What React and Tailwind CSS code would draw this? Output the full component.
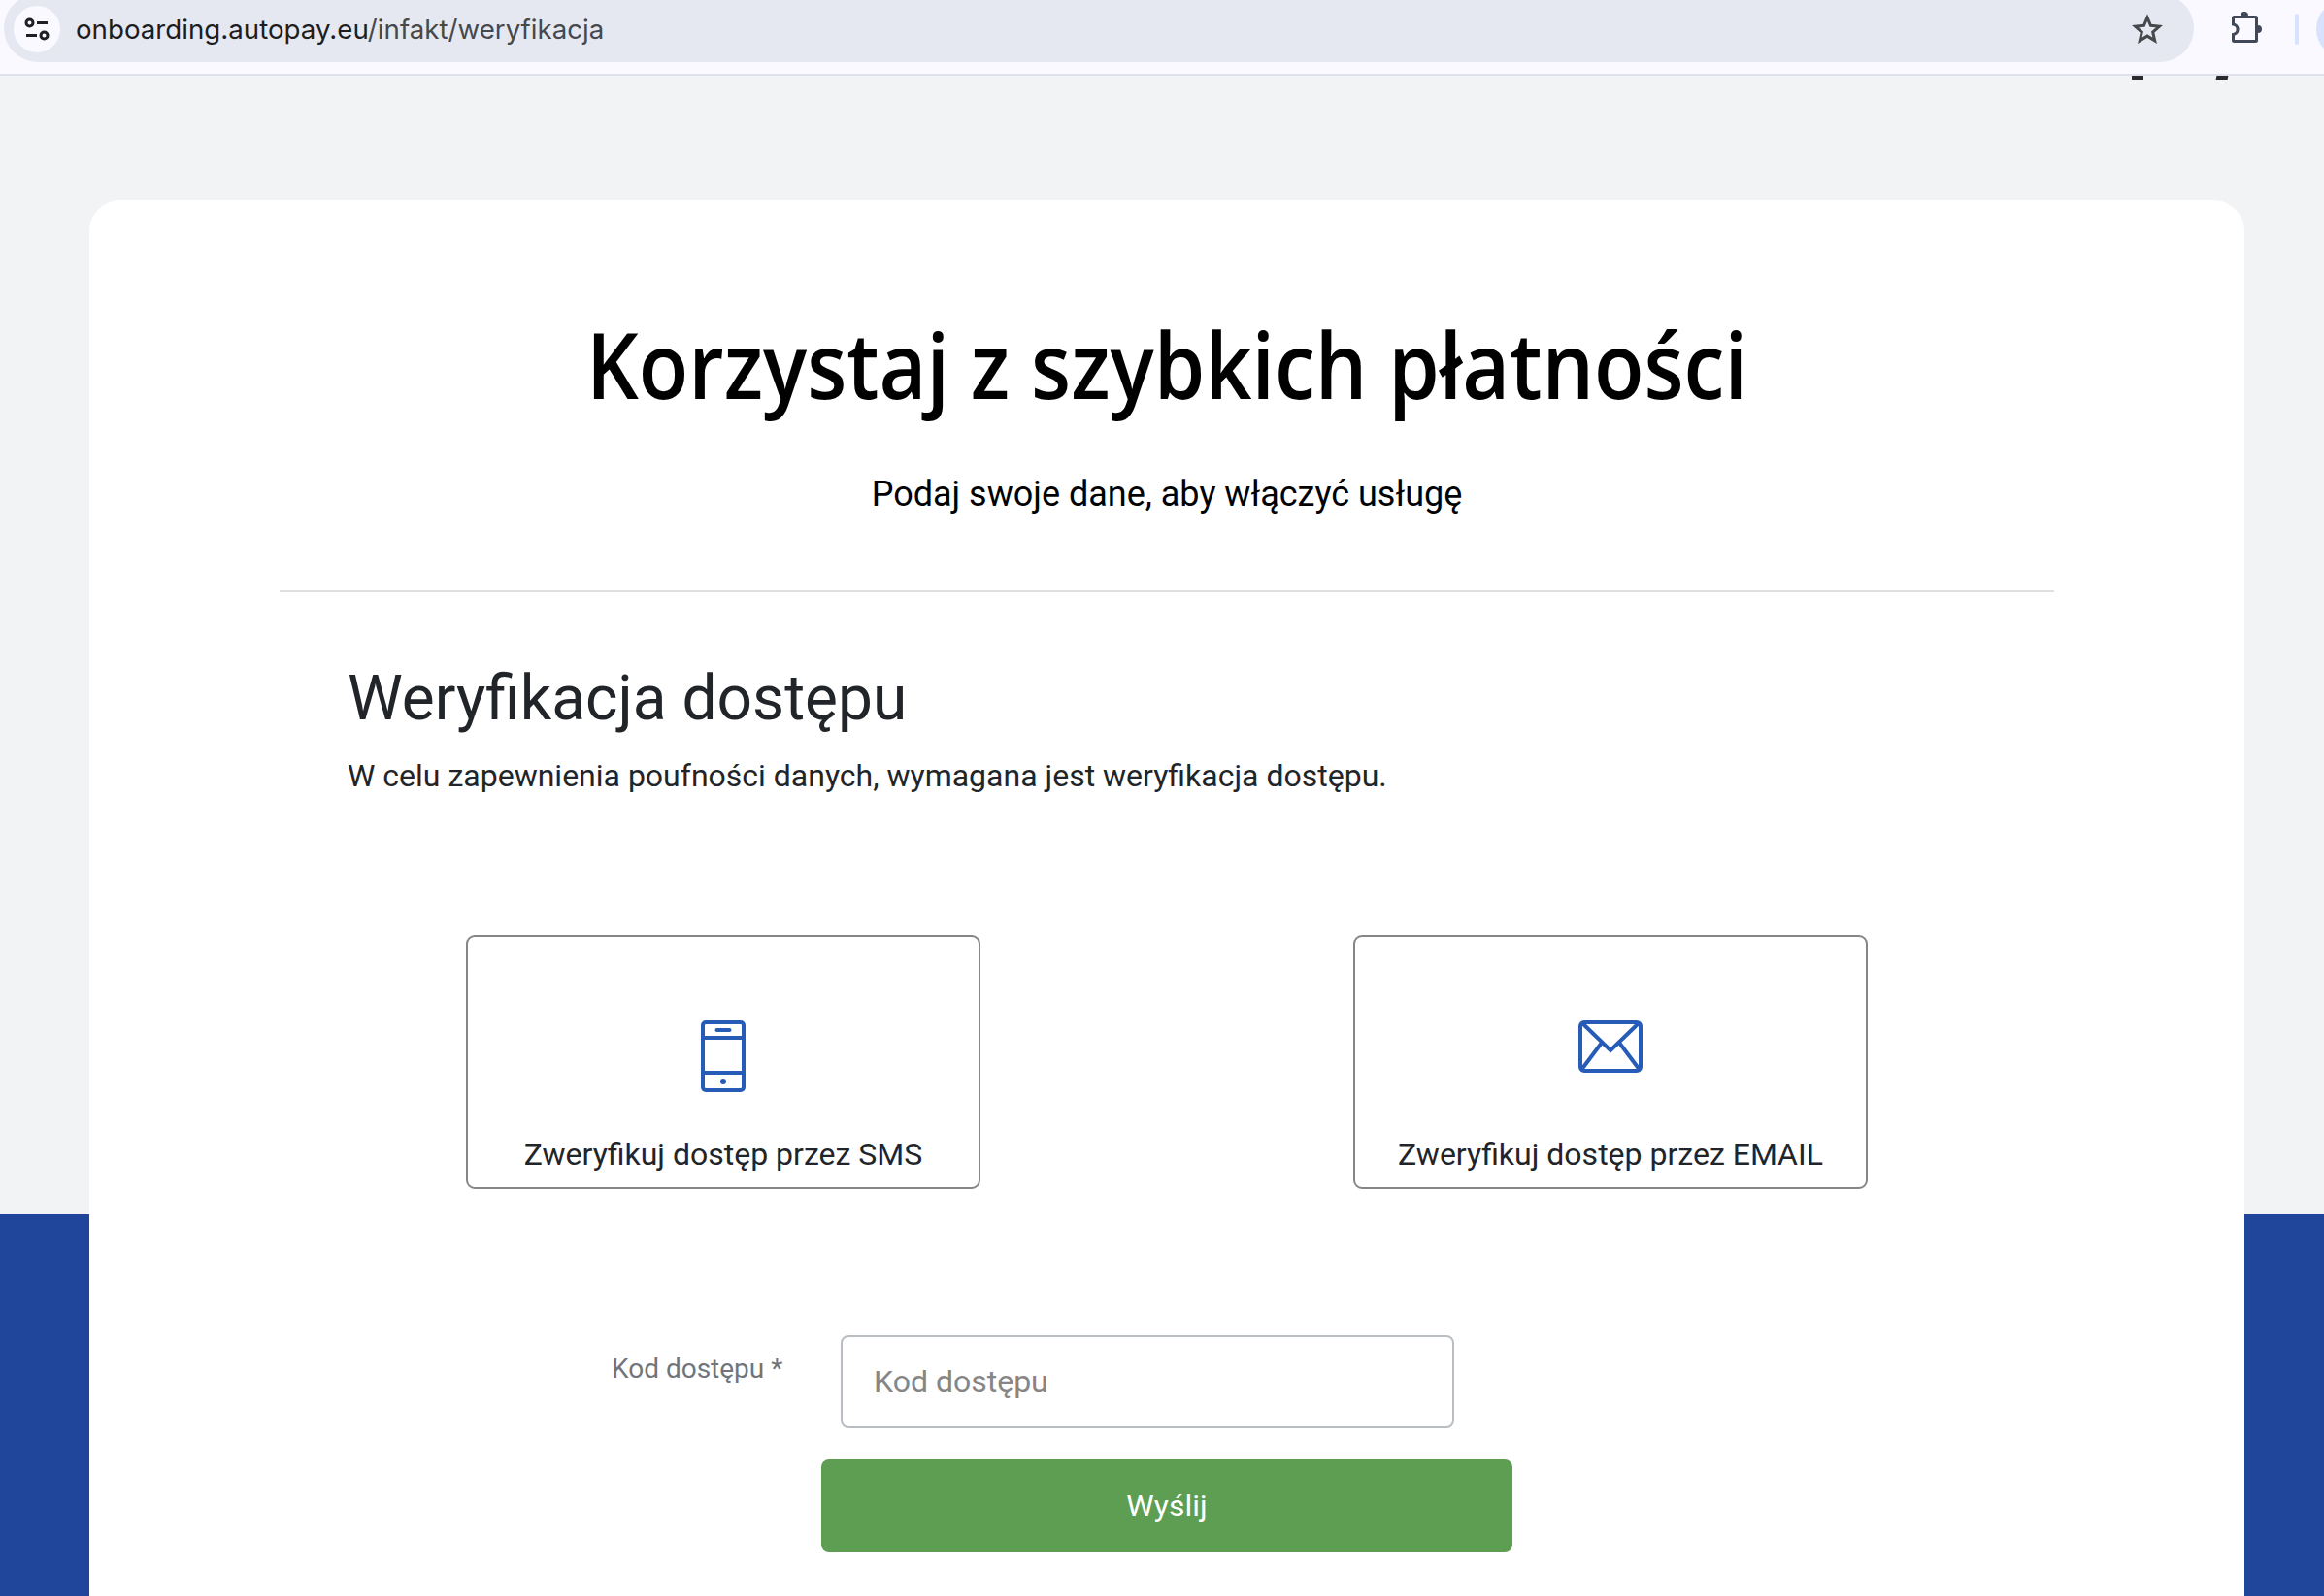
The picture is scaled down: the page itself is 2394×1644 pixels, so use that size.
import { useState } from "react";

function AddressBar() {
  return (
    <header className="h-[78px] shrink-0 bg-[#faf9ff] border-b-2 border-[#dfe1ec] flex overflow-hidden">
      <div className="w-[2256px] h-[70px] -mt-1.5 ml-1 shrink-0 bg-[#e5e8f1] rounded-full flex items-center pl-[10px] pr-8">
        <div className="size-12 mt-0.5 rounded-full bg-[#faf9ff] flex items-center justify-center">
          <svg width="26" height="24" viewBox="0 0 26 24" fill="none" stroke="#1f2024" strokeWidth="3">
            <circle cx="5.5" cy="5.5" r="3.5" />
            <path d="M13 5.5h11M2 18.5h11" />
            <circle cx="20.5" cy="18.5" r="3.5" />
          </svg>
        </div>
        <span className="ml-4 mt-1 text-[27.7px] font-['Inter',sans-serif] text-[#1c1d21]">
          onboarding.autopay.eu<span className="text-[#47484c]">/infakt/weryfikacja</span>
        </span>
        <svg className="ml-auto mt-0.5" width="32" height="32" viewBox="0 0 32 32" fill="none" stroke="#47484c" strokeWidth="3">
          <path d="M16 4l3.500 8.300 9 .8-6.800 5.900 2 8.800L16 23.100l-7.700 4.700 2-8.800-6.800-5.900 9-.8z" />
        </svg>
      </div>
      <svg className="ml-[36px] mt-[10px] shrink-0" width="36" height="36" viewBox="0 0 36 36" fill="none">
        <path d="M5.500 7.500h22a1 1 0 0 1 1 1v23a1 1 0 0 1-1 1h-22a1 1 0 0 1-1-1V25.500a5.300 5.300 0 0 0 0-10.500V8.500a1 1 0 0 1 1-1z" stroke="#414858" strokeWidth="3" />
        <path d="M12 6a4 4 0 0 1 8 0zM30 16a4 4 0 0 1 0 8z" fill="#414858" />
      </svg>
      <div className="w-1 h-8 mt-[14px] ml-[32px] shrink-0 rounded-full bg-[#d7e2fc]" />
      <div className="size-[60px] ml-[18px] shrink-0 rounded-full bg-[#d7e2fc]" />
    </header>
  );
}

function PhoneIcon() {
  return (
    <svg width="52" height="74" viewBox="0 0 52 74" fill="none" stroke="#265cb8" strokeWidth="4">
      <rect x="5" y="2" width="42" height="70" rx="3" />
      <path d="M5 18h42M5 54h42" />
      <path d="M19.500 10h13" strokeLinecap="round" />
      <circle cx="26" cy="63" r="3" fill="#265cb8" stroke="none" />
    </svg>
  );
}

function MailIcon() {
  return (
    <svg width="66" height="54" viewBox="0 0 66 54" fill="none" stroke="#265cb8" strokeWidth="4">
      <rect x="2" y="2" width="62" height="50" rx="4" />
      <path d="M4 3l29 28L62 3M3 51l21-28M63 51L42 23" />
    </svg>
  );
}

function OptionCard({ icon, label }) {
  return (
    <button className="w-[530px] h-[262px] border-2 border-[#868686] rounded-[9px] flex flex-col items-center pt-[86px]">
      <div className="h-[114px]">{icon}</div>
      <span className="text-[32px] leading-[48px] text-[#212529]">{label}</span>
    </button>
  );
}

export default function App() {
  const [kod, setKod] = useState("");

  return (
    <div className="w-[2394px] h-[1644px] overflow-hidden flex flex-col bg-[#f2f3f5] font-['Roboto',sans-serif]">
      <AddressBar />

      {/* bottom edge of the logo letters */}
      <div className="h-1 shrink-0 flex pl-[2196px]">
        <div className="w-3 h-1 bg-[#2b2b2b]" />
        <div className="w-3 h-1 ml-[75px] -skew-x-12 bg-[#2b2b2b]" />
      </div>

      <div className="grow mt-[98px] pt-[26px] flex min-h-0 bg-[linear-gradient(to_bottom,#f2f3f5_1071px,#20469b_1071px)]">
        <main className="w-[2220px] ml-[92px] bg-white rounded-t-[32px] flex flex-col">
          <h1 className="mt-[109px] h-[120px] text-center text-[94px] leading-[120px] font-semibold text-black font-['Open_Sans',sans-serif] scale-x-[0.897]">
            Korzystaj z szybkich płatności
          </h1>
          <p className="mt-[47px] text-center text-[36px] leading-[54px] text-black">Podaj swoje dane, aby włączyć usługę</p>
          <hr className="mx-[196px] mt-[72px] border-t-2 border-[#dfdfdf]" />

          <section className="pl-[266px]">
            <h2 className="mt-[71px] text-[64px] leading-[77px] text-[#212529]">Weryfikacja dostępu</h2>
            <p className="mt-[17px] text-[32px] leading-[48px] text-[#212529]">
              W celu zapewnienia poufności danych, wymagana jest weryfikacja dostępu.
            </p>
          </section>

          <div className="mt-[140px] flex gap-[384px] pl-[388px]">
            <OptionCard icon={<PhoneIcon />} label="Zweryfikuj dostęp przez SMS" />
            <OptionCard icon={<MailIcon />} label="Zweryfikuj dostęp przez EMAIL" />
          </div>

          <div className="mt-[150px] flex pl-[538px]">
            <label htmlFor="kod" className="w-[236px] mt-[14px] text-[28px] leading-[42px] text-[#6f757b]">
              Kod dostępu *
            </label>
            <input
              id="kod"
              placeholder="Kod dostępu"
              value={kod}
              onChange={(e) => setKod(e.target.value)}
              className="w-[632px] h-24 border-2 border-[#b9bec4] rounded-lg px-8 text-[32px] text-[#212529] placeholder:text-[#868686]"
            />
          </div>
          <button className="w-[712px] h-24 mt-8 ml-[754px] rounded-lg bg-[#5d9e52] text-white text-[32px]">Wyślij</button>
        </main>
      </div>
    </div>
  );
}
